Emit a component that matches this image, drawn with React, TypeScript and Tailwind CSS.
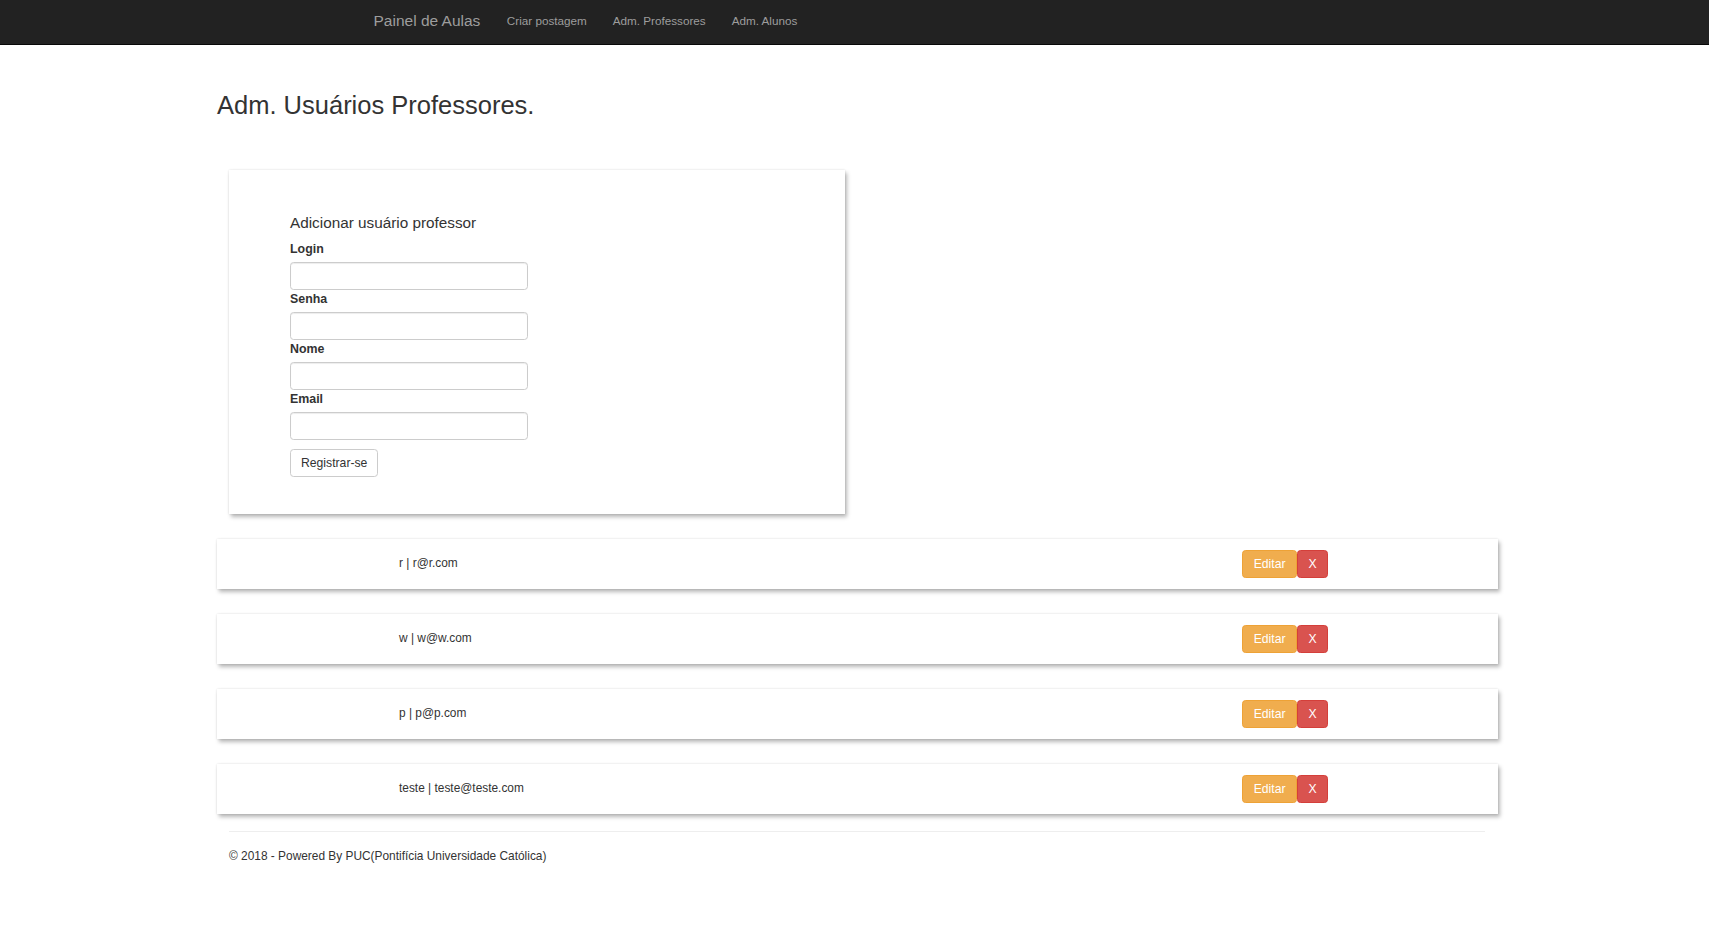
import React from "react";

const users = [
  { nome: "r", email: "r@r.com" },
  { nome: "w", email: "w@w.com" },
  { nome: "p", email: "p@p.com" },
  { nome: "teste", email: "teste@teste.com" },
];

const fields = ["Login", "Senha", "Nome", "Email"];

function Navbar() {
  return (
    <nav className="h-[45px] bg-[#222] border-b border-[#080808]">
      <div className="flex h-full items-center pl-[360px] pb-[2px]">
        <a href="#" className="px-[13.5px] text-[15.5px] text-[#9d9d9d]">
          Painel de Aulas
        </a>
        <a href="#" className="px-[13px] text-[11.7px] text-[#9d9d9d]">
          Criar postagem
        </a>
        <a href="#" className="px-[13px] text-[11.7px] text-[#9d9d9d]">
          Adm. Professores
        </a>
        <a href="#" className="px-[13px] text-[11.7px] text-[#9d9d9d]">
          Adm. Alunos
        </a>
      </div>
    </nav>
  );
}

function UserRow({ nome, email }: { nome: string; email: string }) {
  return (
    <div className="flex h-[50px] items-center bg-white pl-[182px] pr-[170px] shadow-[2px_3px_4px_rgba(0,0,0,0.28),0_0_2px_rgba(0,0,0,0.12)]">
      <span className="flex-1 text-[11.9px] text-[#333]">
        {nome} | {email}
      </span>
      <div className="flex">
        <button className="h-[28.5px] rounded-[3.6px] border border-[#eea236] bg-[#f0ad4e] px-[10.6px] text-[12.2px] text-white">
          Editar
        </button>
        <button className="h-[28.5px] rounded-[3.6px] border border-[#d43f3a] bg-[#d9534f] px-[10.4px] text-[12.2px] text-white">
          X
        </button>
      </div>
    </div>
  );
}

export default function App() {
  return (
    <div className="min-h-screen bg-white font-['Liberation_Sans',Arial,sans-serif] text-[#333]">
      <Navbar />

      <main className="pl-[217px] pr-[211px]">
        <h2 className="mt-[46px] text-[25.5px] leading-[28px]">Adm. Usuários Professores.</h2>

        <div className="ml-[12px] mt-[51px] h-[344px] w-[616px] bg-white pl-[61px] pt-[44px] shadow-[2px_3px_4px_rgba(0,0,0,0.28),0_0_2px_rgba(0,0,0,0.12)]">
          <h4 className="mb-[9px] text-[15.3px] leading-[17px]">Adicionar usuário professor</h4>
          <form className="flex flex-col">
            {fields.map((f) => (
              <div key={f} className="flex flex-col">
                <label className="mb-[4px] text-[12.4px] font-bold leading-[18px]">{f}</label>
                <input
                  type={f === "Senha" ? "password" : "text"}
                  className="h-[28px] w-[238px] rounded-[3.6px] border border-[#ccc] px-[10px] text-[12.6px] shadow-[inset_0_1px_1px_rgba(0,0,0,0.075)] outline-none"
                />
              </div>
            ))}
            <div className="mt-[9px]">
              <button
                type="button"
                className="h-[28px] rounded-[3.6px] border border-[#ccc] bg-white px-[10px] text-[12.2px] text-[#333]"
              >
                Registrar-se
              </button>
            </div>
          </form>
        </div>

        <div className="mt-[25px] flex flex-col gap-[25px]">
          {users.map((u) => (
            <UserRow key={u.email} nome={u.nome} email={u.email} />
          ))}
        </div>

        <footer className="ml-[12px] mr-[13px] mt-[17px]">
          <hr className="border-t border-[#eee]" />
          <p className="mt-[15px] text-[11.9px] leading-[18px]">
            © 2018 - Powered By PUC(Pontifícia Universidade Católica)
          </p>
        </footer>
      </main>
    </div>
  );
}
